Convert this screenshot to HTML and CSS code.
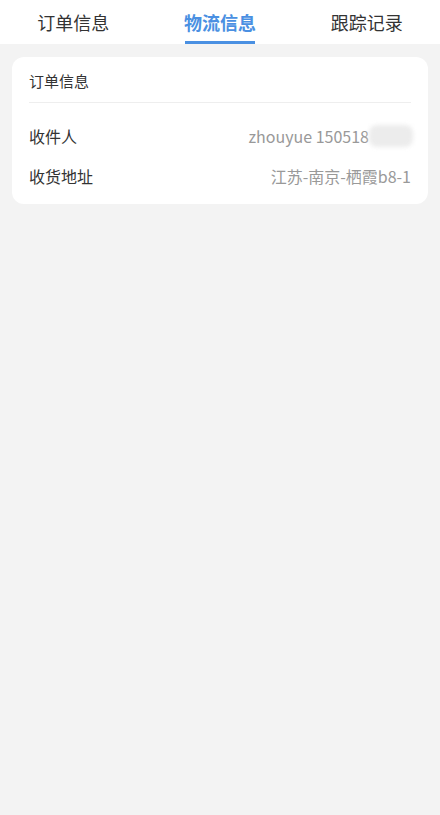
FILE: index.html
```html
<!DOCTYPE html>
<html lang="zh-CN">
<head>
    <meta charset="UTF-8">
    <meta name="viewport" content="width=device-width, initial-scale=1.0">
    <title>物流信息</title>
    <link rel="stylesheet" href="styles.css">
</head>
<body>
    <div class="tabs">
        <div class="tab">订单信息</div>
        <div class="tab active">物流信息</div>
        <div class="tab">跟踪记录</div>
    </div>

    <div class="card">
        <div class="card-title">订单信息</div>
        <div class="rows">
            <div class="row">
                <span class="label">收件人</span>
                <span class="value">zhouyue 150518<span class="mask"></span></span>
            </div>
            <div class="row">
                <span class="label">收货地址</span>
                <span class="value">江苏-南京-栖霞b8-1</span>
            </div>
        </div>
    </div>
</body>
</html>
```

FILE: styles.css
```css
body {
    margin: 0;
    background-color: #f3f3f3;
    font-family: "Noto Sans CJK SC", "Noto Sans", sans-serif;
    color: #333;
}
.tabs {
    display: flex;
    background-color: white;
    height: 44px;
}
.tab {
    flex: 1;
    display: flex;
    justify-content: center;
    align-items: center;
    font-size: 18px;
    color: #333;
}
.tab.active {
    color: #4a90e2;
    font-weight: bold;
    background-image: linear-gradient(#4a90e2, #4a90e2);
    background-repeat: no-repeat;
    background-size: 70px 3px;
    background-position: center bottom;
}
.card {
    margin: 13px 12px;
    background-color: white;
    border-radius: 12px;
    padding: 0 17px 8px;
}
.card-title {
    font-size: 15px;
    height: 45px;
    line-height: 47px;
    border-bottom: 1px solid #eeeeee;
}
.rows {
    padding-top: 13px;
}
.row {
    display: flex;
    justify-content: space-between;
    align-items: center;
    height: 40px;
    font-size: 16px;
}
.label {
    color: #333;
}
.value {
    color: #999;
    display: flex;
    align-items: center;
}
.mask {
    display: inline-block;
    width: 44px;
    height: 22px;
    margin-right: -2px;
    background-color: #ececec;
    border-radius: 8px;
    filter: blur(2px);
}
```
